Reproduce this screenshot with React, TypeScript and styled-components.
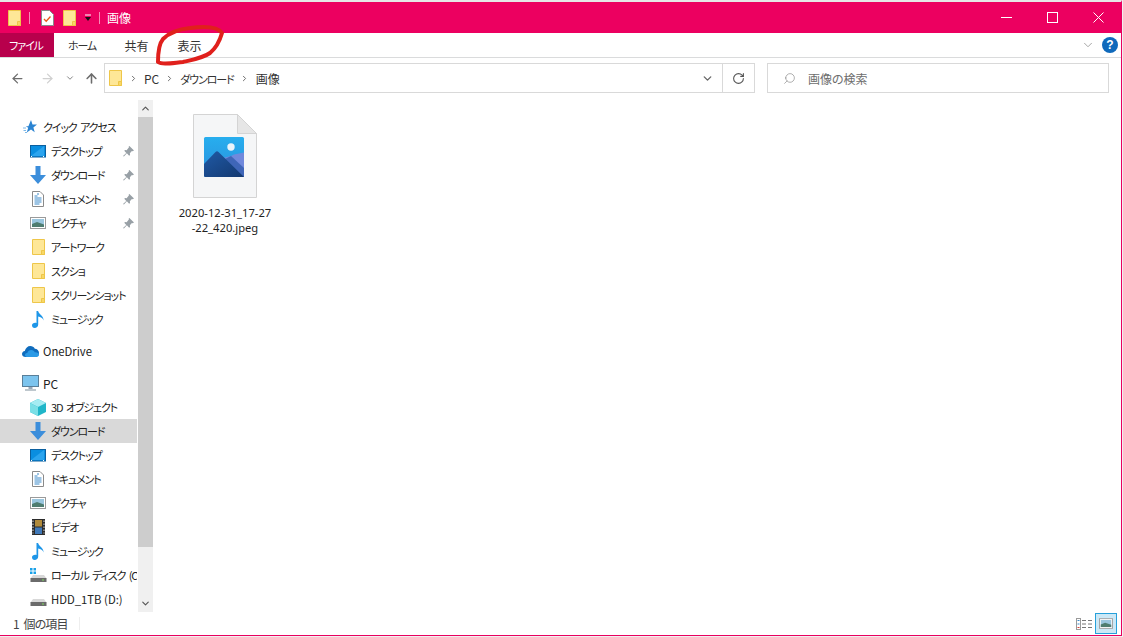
import React from 'react';
import styled, { createGlobalStyle } from 'styled-components';
import { ArrowLeft, ArrowRight, ArrowUp, ChevronDown, ChevronRight, ChevronUp, RotateCw, Search } from 'lucide-react';

const GlobalStyle = createGlobalStyle`
  html, body {
    margin: 0;
    padding: 0;
    background: #f0f0f0;
    overflow: hidden;
  }
  * {
    box-sizing: border-box;
  }
`;

const FONT = '"Noto Sans CJK JP", "Noto Sans", sans-serif';

const Window = styled.div`
  position: relative;
  width: 1122px;
  height: 636px;
  display: flex;
  flex-direction: column;
  background: #fff;
  border-right: 1px solid #e8005f;
  border-bottom: 1px solid #e8005f;
  border-top: 2px solid #e6e6e6;
  font-family: ${FONT};
  font-feature-settings: "palt";
  font-size: 12px;
  color: #222;
  overflow: hidden;
`;

// katakana in the original font is much narrower than Noto's
const Kana = styled.span`
  font-size: 11px;
  letter-spacing: -1.1px;
  word-spacing: 2px;
`;

const Latin = styled.span`
  font-size: 11.3px;
`;

const TitleBar = styled.div`
  height: 31px;
  flex: none;
  background: #ec0060;
  display: flex;
  align-items: center;
  padding-left: 8px;
`;

const QuickTool = styled.span<{ $gap?: number }>`
  display: flex;
  margin-left: ${p => p.$gap ?? 0}px;
`;

const TitleDivider = styled.span<{ $gap: number }>`
  width: 1px;
  height: 12px;
  margin-left: ${p => p.$gap}px;
  background: #f78bb6;
`;

const TitleText = styled.span`
  color: #fff;
  margin-left: 7px;
`;

const WindowButtons = styled.div`
  margin-left: auto;
  display: flex;
  align-items: center;
`;

const WindowButton = styled.div`
  width: 46px;
  height: 31px;
  display: flex;
  align-items: center;
  justify-content: center;
`;

const RibbonTabs = styled.div`
  height: 25px;
  flex: none;
  display: flex;
  align-items: stretch;
  border-bottom: 1px solid #dadbdc;
  background: #fff;
`;

const FileTab = styled.div`
  width: 54px;
  padding-right: 2px;
  background: #b8004c;
  color: #fff;
  display: flex;
  align-items: center;
  justify-content: center;
`;

const RibbonTab = styled.div<{ $width: number }>`
  width: ${p => p.$width}px;
  color: #333;
  display: flex;
  align-items: center;
  justify-content: center;
`;

const RibbonEnd = styled.div`
  margin-left: auto;
  display: flex;
  align-items: center;
  gap: 7px;
  padding-right: 3px;
  color: #999;
`;

const HelpBadge = styled.span`
  width: 16px;
  height: 16px;
  border-radius: 50%;
  background: #0f69bb;
  color: #fff;
  font: bold 12px/16px "Liberation Sans", sans-serif;
  text-align: center;
`;

const NavBar = styled.div`
  height: 40px;
  flex: none;
  display: flex;
  align-items: center;
`;

const NavButtons = styled.div`
  width: 104px;
  flex: none;
  display: flex;
  align-items: center;
  padding-left: 10px;
`;

const NavArrow = styled.span<{ $width: number; $muted?: boolean }>`
  width: ${p => p.$width}px;
  display: flex;
  color: ${p => (p.$muted ? '#d0d0d0' : '#6d6d6d')};
`;

const AddressBox = styled.div`
  width: 651px;
  height: 30px;
  border: 1px solid #d9d9d9;
  display: flex;
  align-items: center;
  padding-left: 4px;
`;

const Crumb = styled.span`
  color: #333;
`;

const CrumbSep = styled.span<{ $width: number }>`
  width: ${p => p.$width}px;
  display: flex;
  justify-content: center;
  color: #666;
`;

const AddressEnd = styled.div`
  margin-left: auto;
  height: 100%;
  display: flex;
  align-items: center;
`;

const DropSlot = styled.span`
  width: 30px;
  display: flex;
  justify-content: center;
  color: #666;
`;

const RefreshSlot = styled.span`
  width: 32px;
  height: 100%;
  border-left: 1px solid #d9d9d9;
  display: flex;
  align-items: center;
  justify-content: center;
  color: #555;
`;

const SearchBox = styled.div`
  width: 342px;
  height: 30px;
  margin-left: 12px;
  border: 1px solid #d9d9d9;
  display: flex;
  align-items: center;
  gap: 12px;
  padding-left: 15px;
  color: #6d6d6d;
`;

const Body = styled.div`
  flex: 1;
  min-height: 0;
  display: flex;
`;

const Sidebar = styled.div`
  width: 155px;
  flex: none;
  display: flex;
`;

const Tree = styled.div`
  width: 137px;
  flex: none;
  padding-top: 17px;
  overflow: hidden;
`;

const TreeRow = styled.div<{ $indent?: number; $selected?: boolean; $gapTop?: number }>`
  position: relative;
  height: 24px;
  margin-top: ${p => p.$gapTop ?? 0}px;
  padding-left: ${p => p.$indent ?? 29}px;
  display: flex;
  align-items: center;
  gap: 4px;
  background: ${p => (p.$selected ? '#d9d9d9' : 'transparent')};
  color: #222;
  white-space: nowrap;
`;

const TreeIcon = styled.span`
  width: 18px;
  height: 18px;
  flex: none;
  display: flex;
  align-items: center;
  justify-content: center;
`;

const PinSlot = styled.span`
  position: absolute;
  right: 3px;
  top: 7px;
  display: flex;
`;

const Scrollbar = styled.div`
  width: 15px;
  margin: 2px 0 0 1px;
  flex: none;
  display: flex;
  flex-direction: column;
  background: #f0f0f0;
  color: #555;
`;

const ScrollEnd = styled.div`
  height: 17px;
  flex: none;
  display: flex;
  align-items: center;
  justify-content: center;
`;

const ScrollThumb = styled.div`
  height: 430px;
  flex: none;
  background: #cdcdcd;
`;

const ScrollTrack = styled.div`
  flex: 1;
`;

const Content = styled.div`
  flex: 1;
  padding: 16px 0 0 22px;
`;

const FileItem = styled.div`
  width: 96px;
  display: flex;
  flex-direction: column;
  align-items: center;
  text-align: center;
  color: #222;
`;

const FileName = styled.span`
  margin-top: 7px;
  font-family: "Noto Sans", sans-serif;
  font-size: 11.2px;
  line-height: 15px;
`;

const StatusBar = styled.div`
  height: 23px;
  flex: none;
  display: flex;
  align-items: center;
  padding: 0 4px 0 13px;
  color: #444;
`;

const StatusText = styled.span`
  letter-spacing: -0.9px;
  word-spacing: 3px;
`;

const StatusDivider = styled.span`
  width: 1px;
  height: 13px;
  margin-left: 11px;
  background: #eee;
`;

const ViewButtons = styled.div`
  margin-left: auto;
  display: flex;
  align-items: center;
`;

const ViewButton = styled.div<{ $active?: boolean }>`
  width: 22px;
  height: 21px;
  display: flex;
  align-items: center;
  justify-content: center;
  border: 1px solid ${p => (p.$active ? '#26a0da' : 'transparent')};
  background: ${p => (p.$active ? '#cbe8f6' : 'transparent')};
`;

const Annotation = styled.svg`
  position: absolute;
  left: 0;
  top: -2px;
  pointer-events: none;
`;

const FolderIcon = () => (
  <svg width="13" height="16" viewBox="0 0 13 16">
    <path d="M.5.5h12v15H.5z" fill="#fee797" stroke="#eec649" />
    <path d="M9.5 15.5V11.500h3v4z" fill="#f8d866" stroke="#eec649" />
  </svg>
);

const ChecklistIcon = () => (
  <svg width="13" height="16" viewBox="0 0 13 16">
    <path d="M.5.5h8l4 4v11H.5z" fill="#fff" stroke="#8a8a8a" />
    <path d="M3 9l2.200 2.200L9.500 6.500" fill="none" stroke="#e8591a" strokeWidth="1.300" />
  </svg>
);

const MonitorIcon = () => (
  <svg width="16" height="13" viewBox="0 0 16 13">
    <rect x="0.500" y="0.500" width="15" height="11.500" fill="#0a8ee0" stroke="#0b5f9e" />
    <path d="M1 11l13-10v10z" fill="#2ba4ee" />
    <path d="M1 11.500h14" stroke="#fff" strokeDasharray="1 11" />
  </svg>
);

const DownloadIcon = () => (
  <svg width="16" height="18" viewBox="0 0 16 18">
    <path d="M5.500 0h5v9H16l-8 9-8-9h5.500z" fill="#3c8edb" />
  </svg>
);

const DocumentIcon = () => (
  <svg width="12" height="16" viewBox="0 0 12 16">
    <path d="M.5.5h7.500l3.500 3.500v11.500H.5z" fill="#fff" stroke="#8a8a8a" />
    <path d="M5 3h2M2.500 5h3M2.500 7h7M2.500 9h7M2.500 11h7M2.500 13h5" stroke="#3a89c9" />
  </svg>
);

const PictureIcon = ({ width = 16, height = 12 }: { width?: number; height?: number }) => (
  <svg width={width} height={height} viewBox="0 0 16 12">
    <rect x="0.500" y="0.500" width="15" height="11" fill="#fff" stroke="#9a9a9a" />
    <rect x="2" y="2" width="12" height="8" fill="#9ac6de" />
    <path d="M2 7l5-2 7 2.500V10H2z" fill="#4f7d70" />
  </svg>
);

const MusicIcon = () => (
  <svg width="13" height="17" viewBox="0 0 13 17">
    <path d="M4.500 0h1.600c.3 3 5.500 4.500 5.500 9.500-.8-2.500-3-3.700-5.400-4V13.500c0 2-1.700 3.500-3.500 3.500S0 15.800 0 14.300c0-1.600 2-3 4.500-2.400z" fill="#1e96e8" />
  </svg>
);

const VideoIcon = () => (
  <svg width="13" height="16" viewBox="0 0 13 16">
    <rect width="13" height="16" fill="#2c2c2c" />
    <rect x="3" y="1" width="7" height="6.500" fill="#b08a3a" />
    <rect x="3" y="8.500" width="7" height="6.500" fill="#3f78b8" />
    <path d="M1 1.500v13M12 1.500v13" stroke="#ddd" strokeDasharray="1.500 1.500" />
  </svg>
);

const CubeIcon = () => (
  <svg width="16" height="17" viewBox="0 0 16 17">
    <path d="M8 0l8 4v9l-8 4-8-4V4z" fill="#1fb6c9" />
    <path d="M8 0l8 4-8 4-8-4z" fill="#a5ecf2" />
    <path d="M0 4l8 4v9l-8-4z" fill="#7adfe6" />
  </svg>
);

const CloudIcon = () => (
  <svg width="17" height="11" viewBox="0 0 17 11">
    <path d="M3.500 11C1.500 11 0 9.700 0 8c0-1.600 1.200-2.800 2.800-3C3.500 2 5.700 0 8.300 0c2 0 3.700 1 4.500 2.800 2.300 0 4.200 1.800 4.200 4.200 0 2.300-1.700 4-4 4z" fill="#0f6cbd" />
    <path d="M5 11c-1.300 0-2-1-2-2 0-1.200 1-2.100 2.300-2 .5-1.800 2-3 4-3 1.700 0 3 .9 3.700 2.400 2.200-.2 4 .8 4 2.400 0 1.300-1 2.200-2.500 2.200z" fill="#2b9ae6" />
  </svg>
);

const PcIcon = () => (
  <svg width="17" height="16" viewBox="0 0 17 16">
    <rect x="0.500" y="0.500" width="16" height="11" fill="#7cc4ee" stroke="#5a7f99" />
    <path d="M6.500 12h4v2h-4z" fill="#9ab" />
    <path d="M3 15h11" stroke="#a9b4bc" strokeWidth="1.500" />
  </svg>
);

const DriveIcon = ({ windows }: { windows?: boolean }) => (
  <svg width="17" height="16" viewBox="0 0 17 16">
    {windows && <path d="M0 1h2.500v2.500H0zM3.500 1H6v2.500H3.500zM0 4.500h2.500V7H0zM3.500 4.500H6V7H3.500z" fill="#1aa1e8" />}
    <path d="M3 8h11l2.500 3.500H.5z" fill="#d8d8d8" />
    <rect x="0.500" y="11" width="16" height="4" fill="#6b6b6b" />
    <rect x="12" y="12.500" width="2" height="1" fill="#7ddc5c" />
  </svg>
);

const PinIcon = () => (
  <svg width="11" height="11" viewBox="0 0 12 12">
    <path d="M7 0l5 5-1.500.8-.8-.3L7.500 8l.2 1.800-1 .8L4.200 8 1 11.500 0 11l3.600-3.500L1.400 5.300l.8-1 1.800.2L6.500 1.300 6.200.6z" fill="#98a0a6" />
  </svg>
);

const StarIcon = () => (
  <svg width="14" height="14" viewBox="0 0 14 14">
    <path d="M8 0l1.500 4.400H14l-3.600 3 1.300 4.900L8 9.500 3.800 12.500l1.400-4.700L2.800 6.200h2.600z" fill="#2b84d2" />
    <path d="M0 8h3M0.500 10.500h2.500M2 12.500h2" stroke="#7db8e8" />
  </svg>
);

const JpegFileIcon = () => (
  <svg width="64" height="84" viewBox="0 0 64 84">
    <defs>
      <linearGradient id="sky" x1="0" y1="0" x2="0" y2="1">
        <stop offset="0" stopColor="#27aeee" />
        <stop offset="1" stopColor="#2a8fdc" />
      </linearGradient>
      <linearGradient id="peak" x1="0" y1="0" x2="1" y2="1">
        <stop offset="0" stopColor="#1f5aa6" />
        <stop offset="1" stopColor="#14386f" />
      </linearGradient>
    </defs>
    <path d="M.5.500h44l19 19v64H.5z" fill="#f5f6f7" stroke="#d4d4d4" />
    <path d="M44.500.500v19h19z" fill="#e6e6e6" stroke="#d4d4d4" />
    <rect x="11" y="23" width="40" height="40" rx="1.500" fill="url(#sky)" />
    <path d="M51 38.500V63H30V44l8-2 3-1.500z" fill="#7089dc" />
    <path d="M30 46l8-4 13 12v9H30z" fill="#3f66b8" />
    <circle cx="38" cy="33" r="3.700" fill="#e9f4fb" />
    <path d="M11 50l11.500-12c1-1 2-1 3 0L51 63H12.500c-1 0-1.500-.6-1.500-1.500z" fill="url(#peak)" />
  </svg>
);

const ListViewIcon = () => (
  <svg width="16" height="12" viewBox="0 0 16 12">
    <rect x="0.500" y="0.500" width="4" height="11" fill="#fff" stroke="#9a9a9a" />
    <path d="M1.500 2.500h2M1.500 6h2" stroke="#3a89c9" />
    <path d="M1.500 9.500h2" stroke="#d8413a" />
    <path d="M6 2.500h4M12 2.500h4M6 6h4M12 6h4M6 9.500h4M12 9.500h4" stroke="#777" />
  </svg>
);

const quickRows = [
  { icon: <MonitorIcon />, label: 'デスクトップ', pin: true },
  { icon: <DownloadIcon />, label: 'ダウンロード', pin: true },
  { icon: <DocumentIcon />, label: 'ドキュメント', pin: true },
  { icon: <PictureIcon />, label: 'ピクチャ', pin: true },
  { icon: <FolderIcon />, label: 'アートワーク' },
  { icon: <FolderIcon />, label: 'スクショ' },
  { icon: <FolderIcon />, label: 'スクリーンショット' },
  { icon: <MusicIcon />, label: 'ミュージック' },
];

const pcRows = [
  { icon: <CubeIcon />, label: '3D オブジェクト' },
  { icon: <DownloadIcon />, label: 'ダウンロード', selected: true },
  { icon: <MonitorIcon />, label: 'デスクトップ' },
  { icon: <DocumentIcon />, label: 'ドキュメント' },
  { icon: <PictureIcon />, label: 'ピクチャ' },
  { icon: <VideoIcon />, label: 'ビデオ' },
  { icon: <MusicIcon />, label: 'ミュージック' },
  { icon: <DriveIcon windows />, label: 'ローカル ディスク (C:)' },
];

const App: React.FC = () => {
  return (
    <>
      <GlobalStyle />
      <Window>
        <TitleBar>
          <QuickTool><FolderIcon /></QuickTool>
          <TitleDivider $gap={8} />
          <QuickTool $gap={11}><ChecklistIcon /></QuickTool>
          <QuickTool $gap={9}><FolderIcon /></QuickTool>
          <QuickTool $gap={8}>
            <svg width="8" height="8" viewBox="0 0 8 8">
              <path d="M1 1h6" stroke="#fff" />
              <path d="M1 3h6L4 7z" fill="#111" />
            </svg>
          </QuickTool>
          <TitleDivider $gap={7} />
          <TitleText>画像</TitleText>
          <WindowButtons>
            <WindowButton>
              <svg width="11" height="11" viewBox="0 0 11 11"><path d="M0 5.500h11" stroke="#fff" /></svg>
            </WindowButton>
            <WindowButton>
              <svg width="11" height="11" viewBox="0 0 11 11"><rect x="0.500" y="0.500" width="10" height="10" fill="none" stroke="#fff" /></svg>
            </WindowButton>
            <WindowButton>
              <svg width="11" height="11" viewBox="0 0 11 11"><path d="M.5.500l10 10M10.500.500l-10 10" stroke="#fff" /></svg>
            </WindowButton>
          </WindowButtons>
        </TitleBar>

        <RibbonTabs>
          <FileTab><Kana>ファイル</Kana></FileTab>
          <RibbonTab $width={56}><Kana>ホーム</Kana></RibbonTab>
          <RibbonTab $width={53}>共有</RibbonTab>
          <RibbonTab $width={53}>表示</RibbonTab>
          <RibbonEnd>
            <ChevronDown size={14} strokeWidth={1.5} />
            <HelpBadge>?</HelpBadge>
          </RibbonEnd>
        </RibbonTabs>

        <NavBar>
          <NavButtons>
            <NavArrow $width={30}><ArrowLeft size={15} strokeWidth={2} /></NavArrow>
            <NavArrow $width={25} $muted><ArrowRight size={15} strokeWidth={2} /></NavArrow>
            <NavArrow $width={19}><ChevronDown size={10} strokeWidth={2} /></NavArrow>
            <NavArrow $width={15}><ArrowUp size={15} strokeWidth={2.500} /></NavArrow>
          </NavButtons>
          <AddressBox>
            <FolderIcon />
            <CrumbSep $width={22}><ChevronRight size={9} strokeWidth={2.500} /></CrumbSep>
            <Crumb>PC</Crumb>
            <CrumbSep $width={21}><ChevronRight size={9} strokeWidth={2.500} /></CrumbSep>
            <Crumb><Kana>ダウンロード</Kana></Crumb>
            <CrumbSep $width={22}><ChevronRight size={9} strokeWidth={2.500} /></CrumbSep>
            <Crumb>画像</Crumb>
            <AddressEnd>
              <DropSlot><ChevronDown size={13} strokeWidth={2.500} /></DropSlot>
              <RefreshSlot><RotateCw size={13} strokeWidth={2} /></RefreshSlot>
            </AddressEnd>
          </AddressBox>
          <SearchBox>
            <Search size={13} strokeWidth={1} style={{ transform: 'scaleX(-1)' }} />
            画像の検索
          </SearchBox>
        </NavBar>

        <Body>
          <Sidebar>
            <Tree>
              <TreeRow $indent={21}><TreeIcon><StarIcon /></TreeIcon><Kana>クイック アクセス</Kana></TreeRow>
              {quickRows.map(row => (
                <TreeRow key={row.label}>
                  <TreeIcon>{row.icon}</TreeIcon>
                  <Kana>{row.label}</Kana>
                  {row.pin && <PinSlot><PinIcon /></PinSlot>}
                </TreeRow>
              ))}
              <TreeRow $indent={21} $gapTop={8}><TreeIcon><CloudIcon /></TreeIcon><Latin>OneDrive</Latin></TreeRow>
              <TreeRow $indent={21} $gapTop={8}><TreeIcon><PcIcon /></TreeIcon>PC</TreeRow>
              {pcRows.map(row => (
                <TreeRow key={row.label} $selected={row.selected}>
                  <TreeIcon>{row.icon}</TreeIcon>
                  <Kana>{row.label}</Kana>
                </TreeRow>
              ))}
              <TreeRow>
                <TreeIcon><DriveIcon /></TreeIcon>
                <Latin>HDD_1TB (D:)</Latin>
              </TreeRow>
            </Tree>
            <Scrollbar>
              <ScrollEnd><ChevronUp size={11} strokeWidth={2.500} /></ScrollEnd>
              <ScrollThumb />
              <ScrollTrack />
              <ScrollEnd><ChevronDown size={11} strokeWidth={2.500} /></ScrollEnd>
            </Scrollbar>
          </Sidebar>
          <Content>
            <FileItem>
              <JpegFileIcon />
              <FileName>2020-12-31_17-27<br />-22_420.jpeg</FileName>
            </FileItem>
          </Content>
        </Body>

        <StatusBar>
          <StatusText>1 個の項目</StatusText>
          <StatusDivider />
          <ViewButtons>
            <ViewButton><ListViewIcon /></ViewButton>
            <ViewButton $active><PictureIcon width={14} height={11} /></ViewButton>
          </ViewButtons>
        </StatusBar>

        <Annotation width="300" height="80" viewBox="0 0 300 80">
          <path
            d="M222 33C218 27 205 26 190 28C180 29 170 32 163 39C158 45 158 55 158 62C162 65 172 63 183 62C192 60 203 58 210 53C216 48 220 40 222 33Z"
            fill="none"
            stroke="#e0201c"
            strokeWidth="4"
            strokeLinecap="round"
            strokeLinejoin="round"
          />
        </Annotation>
      </Window>
    </>
  );
};

export default App;
